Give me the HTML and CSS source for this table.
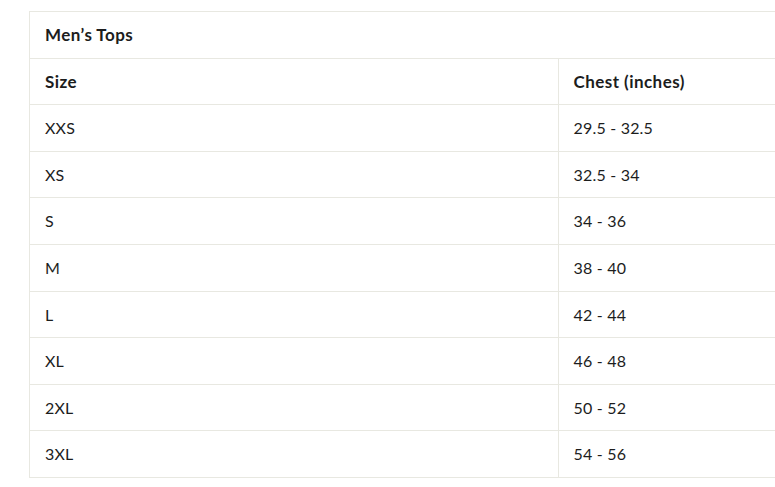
FILE: index.html
```html
<!DOCTYPE html>
<html lang="en">
<head>
<meta charset="utf-8">
<title>Size Chart</title>
<link rel="stylesheet" href="styles.css">
</head>
<body>
<div class="wrap">
  <table class="chart">
    <colgroup><col class="c1"><col class="c2"></colgroup>
    <thead>
      <tr><th colspan="2" class="title">Men’s Tops</th></tr>
      <tr><th>Size</th><th>Chest (inches)</th></tr>
    </thead>
    <tbody>
      <tr><td>XXS</td><td>29.5 - 32.5</td></tr>
      <tr><td>XS</td><td>32.5 - 34</td></tr>
      <tr><td>S</td><td>34 - 36</td></tr>
      <tr><td>M</td><td>38 - 40</td></tr>
      <tr><td>L</td><td>42 - 44</td></tr>
      <tr><td>XL</td><td>46 - 48</td></tr>
      <tr><td>2XL</td><td>50 - 52</td></tr>
      <tr><td>3XL</td><td>54 - 56</td></tr>
    </tbody>
  </table>
</div>
</body>
</html>
```

FILE: styles.css
```css
html, body {
  margin: 0;
  padding: 0;
  background: #ffffff;
  overflow: hidden;
}
.wrap {
  padding: 11px 0 0 29px;
  width: 1200px;
}
.chart {
  border-collapse: collapse;
  width: 1058px;
  table-layout: fixed;
  font-family: "Lato", "Liberation Sans", sans-serif;
  font-size: 16px;
  color: #1c1d1d;
}
.c1, .c2 { width: 50%; }
.chart th, .chart td {
  border: 1px solid #e8e8e1;
  padding: 12px 15px;
  line-height: 21.6px;
  text-align: left;
  vertical-align: middle;
}
.chart th {
  font-weight: 700;
  font-size: 17px;
  letter-spacing: 0.45px;
  color: #1c1d1d;
}
.chart td {
  font-weight: 400;
  letter-spacing: 0.2px;
}
```
